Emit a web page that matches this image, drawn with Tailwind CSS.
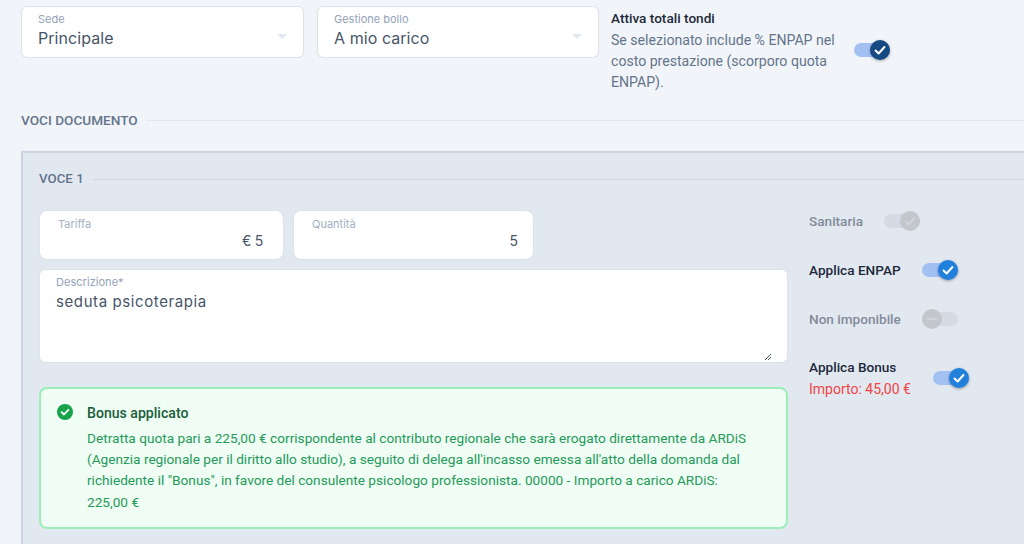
<!DOCTYPE html>
<html lang="it">
<head>
  <meta charset="UTF-8">
  <meta name="viewport" content="width=device-width,initial-scale=1">
  <title>Voci documento</title>
  <script src="https://cdn.jsdelivr.net/npm/@tailwindcss/browser@4"></script>
</head>
<body class="h-[544px] overflow-hidden bg-[#f1f5f9] font-['Roboto',sans-serif] text-[14px] text-[#1e293b]">
  <!-- riga superiore -->
  <div class="flex h-[113px] pl-[21px] pt-[6px]">
    <div class="flex h-[52px] w-[283px] items-center justify-between rounded-md border border-[#cbd5e1]/70 bg-white pb-[4px] pl-[16px] pr-[16px] font-['Inter',sans-serif]">
      <div>
        <div class="mb-[1px] text-[11px] leading-[14px] text-[#94a3b8]">Sede</div>
        <div class="text-[16px] leading-[22px] tracking-[0.06px] text-[#475569]">Principale</div>
      </div>
      <div class="mt-[13px] h-0 w-0 border-x-[5px] border-t-[5px] border-x-transparent border-t-[#e2e8f0]"></div>
    </div>
    <div class="ml-[13px] flex h-[52px] w-[282px] items-center justify-between rounded-md border border-[#cbd5e1]/70 bg-white pb-[4px] pl-[16px] pr-[16px] font-['Inter',sans-serif]">
      <div>
        <div class="mb-[1px] text-[11px] leading-[14px] text-[#94a3b8]">Gestione bollo</div>
        <div class="text-[16px] leading-[22px] tracking-[0.06px] text-[#475569]">A mio carico</div>
      </div>
      <div class="mt-[13px] h-0 w-0 border-x-[5px] border-t-[5px] border-x-transparent border-t-[#e2e8f0]"></div>
    </div>
    <div class="ml-[12px] flex">
      <div class="w-[243px] pt-[2px]">
        <div class="text-[13.6px] leading-[20px] font-medium text-[#1e293b]">Attiva totali tondi</div>
        <div class="mt-[2px] text-[14.1px] leading-[21px] text-[#64748b]">Se selezionato include % ENPAP nel costo prestazione (scorporo quota ENPAP).</div>
      </div>
      <div class="pt-[37px]">
        <div class="flex h-[14px] w-[36px] items-center justify-end rounded-full bg-[#a3c0f3]">
          <div class="flex h-[20px] w-[20px] shrink-0 items-center justify-center rounded-full bg-[#164b82] shadow-[0_1px_3px_rgba(0,0,0,0.35)]">
            <svg class="h-[14px] w-[14px]" viewBox="0 0 12 12" fill="none" stroke="#fff" stroke-width="1.7" stroke-linecap="round" stroke-linejoin="round"><path d="M2.2 6.4 4.8 9 9.8 3.4"/></svg>
          </div>
        </div>
      </div>
    </div>
  </div>

  <!-- voci documento -->
  <div class="flex h-[14px] items-center pl-[21px]">
    <span class="text-[13.6px] leading-[14px] font-medium text-[#64748b]">VOCI DOCUMENTO</span>
    <div class="ml-[8px] h-px flex-1 bg-[#e2e8f0]"></div>
  </div>

  <div class="ml-[21px] mt-[24px] h-[400px] border-l-2 border-t-2 border-[#cbd5e1] bg-[#e2e8f0] pl-[16px]">
    <div class="mt-[19px] flex h-[14px] items-center">
      <span class="text-[13.3px] leading-[14px] font-medium text-[#64748b]">VOCE 1</span>
      <div class="ml-[9px] h-px flex-1 bg-[#cbd5e1]"></div>
    </div>

    <div class="mt-[24px] flex">
      <div class="w-[749px]">
        <div class="flex gap-[9px] font-['Inter',sans-serif]">
          <div class="h-[50px] w-[245px] rounded-lg border border-[#cbd5e1]/70 bg-white pl-[18px] pr-[20px] pt-[6px]">
            <div class="text-[11px] leading-[14px] text-[#a3b0c4]">Tariffa</div>
            <div class="text-right text-[14px] leading-[20px] tracking-[-0.25px] text-[#475569]">€ 5</div>
          </div>
          <div class="h-[50px] w-[241px] rounded-lg border border-[#cbd5e1]/70 bg-white pl-[18px] pr-[15px] pt-[6px]">
            <div class="text-[11px] leading-[14px] text-[#a3b0c4]">Quantità</div>
            <div class="text-right text-[14px] leading-[20px] text-[#475569]">5</div>
          </div>
        </div>
        <div class="relative mt-[9px] h-[94px] rounded-md border border-[#cbd5e1]/70 bg-white pl-[16px] pt-[5px] font-['Inter',sans-serif]">
          <div class="text-[11px] leading-[14px] tracking-[0.04px] text-[#94a3b8]">Descrizione*</div>
          <div class="mt-[3px] text-[15px] leading-[20px] tracking-[0.6px] text-[#475569]">seduta psicoterapia</div>
          <svg class="absolute bottom-[1px] right-[15px] h-[8px] w-[8px]" viewBox="0 0 8 8" stroke="#475569" stroke-width="1"><path d="M7 1 1 7M7 4 4 7"/></svg>
        </div>
        <div class="mt-[24px] flex h-[142px] rounded-lg border-2 border-[#9beeb8] bg-[#f0fdf4] pl-[16px] pt-[14px]">
          <svg class="mt-[1px] h-[16px] w-[16px] shrink-0" viewBox="0 0 16 16"><circle cx="8" cy="8" r="8" fill="#16a34a"/><path d="M4.6 8.2 7 10.5 11.4 5.8" fill="none" stroke="#fff" stroke-width="1.8" stroke-linecap="round" stroke-linejoin="round"/></svg>
          <div class="ml-[14px] w-[665px]">
            <div class="text-[14.1px] leading-[20px] font-medium text-[#1b5e3a]">Bonus applicato</div>
            <div class="mt-[5px] text-[13.65px] leading-[21.2px] text-[#259a5a]">Detratta quota pari a 225,00 € corrispondente al contributo regionale che sarà erogato direttamente da ARDiS (Agenzia regionale per il diritto allo studio), a seguito di delega all'incasso emessa all'atto della domanda dal richiedente il "Bonus", in favore del consulente psicologo professionista. 00000 - Importo a carico ARDiS: 225,00 €</div>
          </div>
        </div>
      </div>

      <!-- interruttori -->
      <div class="ml-[21px] flex flex-col pt-[1px] text-[13.6px] font-medium">
        <div class="flex h-[20px] items-center">
          <span class="w-[75px] leading-[20px] text-[#828b9a]">Sanitaria</span>
          <div class="flex h-[14px] w-[36px] items-center justify-end rounded-full bg-[#d5dbe4]">
            <div class="flex h-[20px] w-[20px] shrink-0 items-center justify-center rounded-full bg-[#c3c6cb]">
              <svg class="h-[14px] w-[14px]" viewBox="0 0 12 12" fill="none" stroke="#d2d5da" stroke-width="1.7" stroke-linecap="round" stroke-linejoin="round"><path d="M2.2 6.4 4.8 9 9.8 3.4"/></svg>
            </div>
          </div>
        </div>
        <div class="mt-[29px] flex h-[20px] items-center">
          <span class="w-[113px] leading-[20px] text-[#1e293b]">Applica ENPAP</span>
          <div class="flex h-[14px] w-[36px] items-center justify-end rounded-full bg-[#a3c0f3]">
            <div class="flex h-[20px] w-[20px] shrink-0 items-center justify-center rounded-full bg-[#2280dd] shadow-[0_1px_3px_rgba(0,0,0,0.35)]">
              <svg class="h-[14px] w-[14px]" viewBox="0 0 12 12" fill="none" stroke="#fff" stroke-width="1.7" stroke-linecap="round" stroke-linejoin="round"><path d="M2.2 6.4 4.8 9 9.8 3.4"/></svg>
            </div>
          </div>
        </div>
        <div class="mt-[29px] flex h-[20px] items-center">
          <span class="w-[113px] leading-[20px] text-[#828b9a]">Non imponibile</span>
          <div class="flex h-[14px] w-[36px] items-center justify-start rounded-full bg-[#d5dbe4]">
            <div class="flex h-[20px] w-[20px] shrink-0 items-center justify-center rounded-full bg-[#c3c6cb]">
              <div class="h-[2px] w-[10px] rounded-full bg-[#d2d5da]"></div>
            </div>
          </div>
        </div>
        <div class="mt-[28px] flex items-center">
          <div class="w-[124px]">
            <div class="leading-[20px] text-[#1e293b]">Applica Bonus</div>
            <div class="mt-[2px] text-[14px] leading-[20px] font-normal text-[#ef4444]">Importo: 45,00 €</div>
          </div>
          <div class="flex h-[14px] w-[36px] items-center justify-end rounded-full bg-[#a3c0f3]">
            <div class="flex h-[20px] w-[20px] shrink-0 items-center justify-center rounded-full bg-[#2280dd] shadow-[0_1px_3px_rgba(0,0,0,0.35)]">
              <svg class="h-[14px] w-[14px]" viewBox="0 0 12 12" fill="none" stroke="#fff" stroke-width="1.7" stroke-linecap="round" stroke-linejoin="round"><path d="M2.2 6.4 4.8 9 9.8 3.4"/></svg>
            </div>
          </div>
        </div>
      </div>
    </div>
  </div>
</body>
</html>
